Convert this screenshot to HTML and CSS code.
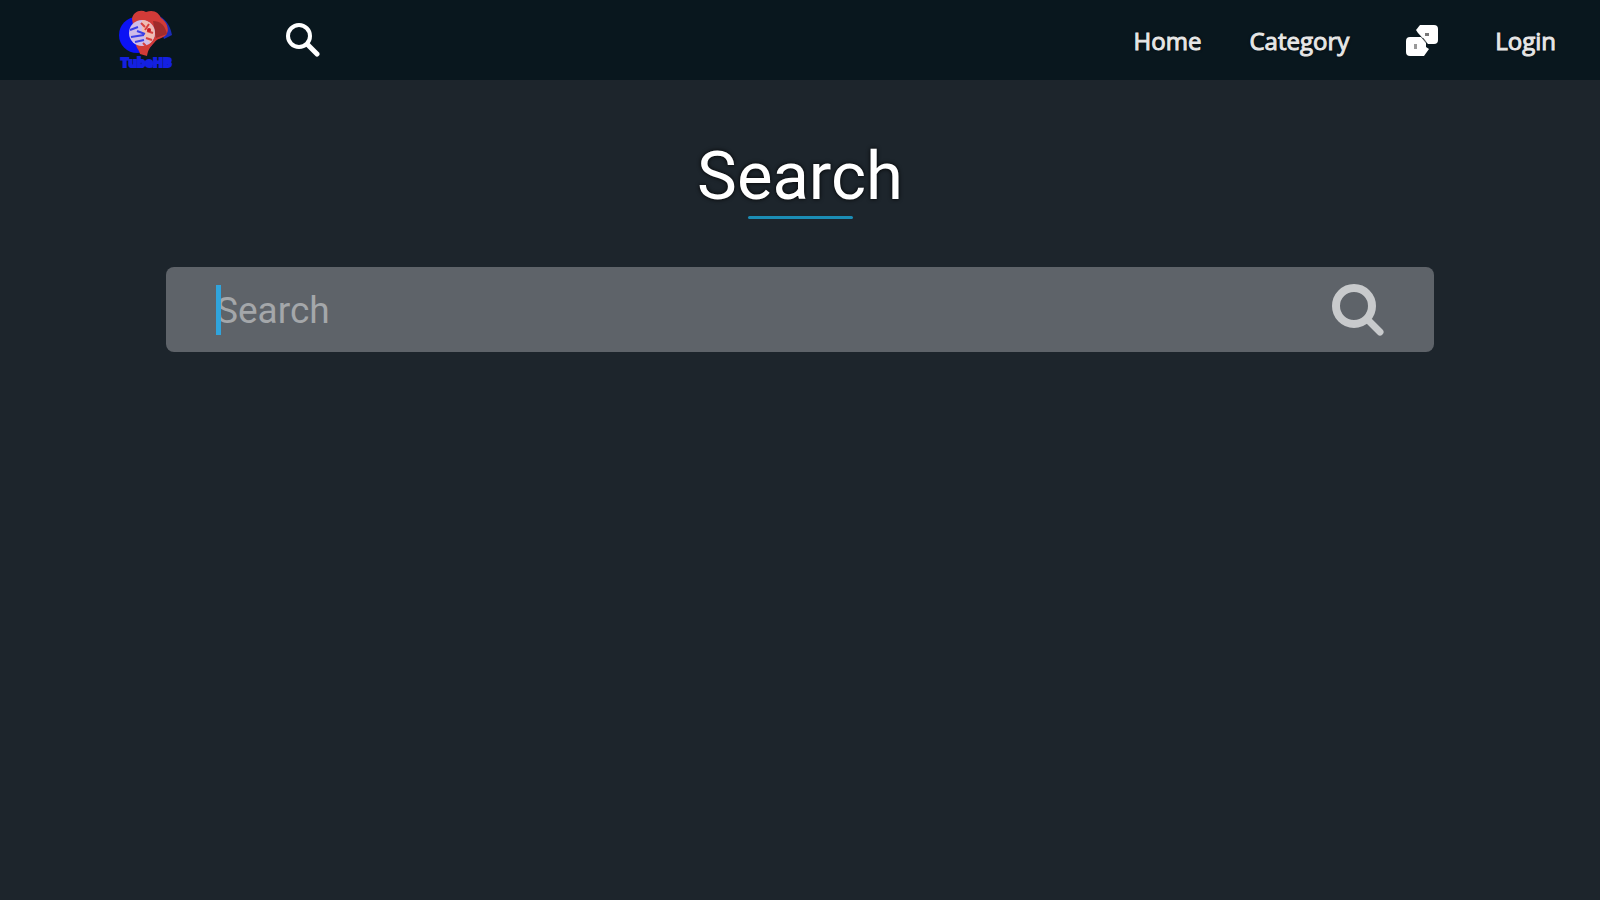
FILE: index.html
```html
<!DOCTYPE html>
<html lang="en">
<head>
  <meta charset="UTF-8">
  <meta name="viewport" content="width=device-width, initial-scale=1">
  <title>Search</title>
  <link rel="stylesheet" href="styles.css">
</head>
<body>

  <header class="navbar">
    <a href="#" class="logo" aria-label="Home page">
      <svg viewBox="0 0 54 60">
        <circle cx="18" cy="25" r="18" fill="#0b12f5"/>
        <path d="M36 4 Q50 9 53 25 L45 29 Z" fill="#1c2cb8"/>
        <path d="M13 9 C14 2 21 -1 27 2 C35 -1 40 3 42 8 C48 12 51 20 47 25 C43 29 38 28 35 33 C31 37 29 40 28 46 L21 44 C20 39 16 38 17 31 Z" fill="#d23b38"/>
        <path d="M34 11 Q45 11 48 24 L37 28 Z" fill="#a02c2c"/>
        <circle cx="23" cy="23" r="13" fill="#d0bce8"/>
        <path d="M23 10 A13 13 0 0 1 31 33 L23 23 Z" fill="#f0bdb4"/>
        <path d="M11 20 l8 -3 M12 27 l13 -2 M16 32 l9 -2 M18 21 l8 3" stroke="#3a3fe8" stroke-width="2"/>
        <path d="M22 13 l4 4 M30 14 l-4 6 M28 21 l6 2 M27 28 l6 2 M24 33 l3 3" stroke="#d8403e" stroke-width="2"/>
        <circle cx="30" cy="20" r="2" fill="#c81420"/>
        <text x="2" y="57" class="logo-text">TubeHB</text>
      </svg>
    </a>
    <a href="#search" class="nav-search" aria-label="Search">
      <svg viewBox="0 0 34 34" fill="none" stroke="#fff" stroke-linecap="round">
        <circle cx="13" cy="13" r="11" stroke-width="4"/>
        <path d="M22 22 L31 31" stroke-width="5"/>
      </svg>
    </a>
    <nav class="menu">
      <a href="#">Home</a>
      <a href="#">Category</a>
      <a href="#" class="random" aria-label="Random">
        <svg viewBox="0 0 34 34">
          <path d="M15 2 H29 Q33 2 33 6 V17 Q33 21 29 21 H23 L13 10 L11 7 Z" fill="#fff"/>
          <path d="M5 14 H16 L21 20 V24 L24 26 L19 33 H5 Q1 33 1 29 V18 Q1 14 5 14 Z" fill="#fff"/>
          <rect x="20" y="10" width="4" height="3" fill="#777"/>
          <rect x="9" y="21" width="3" height="5" fill="#999"/>
          <path d="M18 15 L21 19" stroke="#666" stroke-width="1"/>
        </svg>
      </a>
      <a href="#">Login</a>
    </nav>
  </header>

  <main class="container">
    <h1 class="title">Search</h1>
    <form class="search-box" id="search">
      <span class="caret"></span>
      <input type="text" placeholder="Search" aria-label="Search">
      <button type="submit" aria-label="Search">
        <svg viewBox="0 0 52 52" fill="none" stroke="#c8cacc" stroke-linecap="round">
          <circle cx="22" cy="22" r="18" stroke-width="8"/>
          <path d="M37 37 L48 48" stroke-width="7"/>
        </svg>
      </button>
    </form>
  </main>

</body>
</html>
```

FILE: styles.css
```css
* {
  box-sizing: border-box;
}
body {
  margin: 0;
  background-color: #1d252c;
  font-family: Roboto, Arial, sans-serif;
  color: #fff;
}
.navbar {
  display: flex;
  align-items: center;
  height: 80px;
  padding: 0 44px 0 119px;
  background-color: #09171e;
}
.navbar svg {
  display: block;
}
.logo svg {
  width: 54px;
  height: 60px;
}
.logo-text {
  font: bold 13px "Open Sans", sans-serif;
  fill: #1420e0;
  stroke: #1420e0;
  stroke-width: 2px;
}
.nav-search {
  margin-left: 113px;
}
.nav-search svg,
.random svg {
  width: 34px;
  height: 34px;
}
.menu {
  display: flex;
  align-items: center;
  gap: 48px;
  margin-left: auto;
}
.menu a {
  color: #e6e6e6;
  font-family: "Open Sans", sans-serif;
  font-size: 24px;
  text-decoration: none;
  text-shadow: 0 0 3px #000;
  -webkit-text-stroke: 1px #e6e6e6;
}
.menu .random {
  margin: 0 8px;
}
.container {
  padding: 60px 166px;
}
.title {
  margin: 0 0 48px;
  font-size: 67px;
  font-weight: 400;
  line-height: 72px;
  text-align: center;
  text-shadow: 0 0 4px #000;
}
.title::after {
  content: "";
  display: block;
  width: 105px;
  height: 3px;
  margin: 4px auto 0;
  border-radius: 2px;
  background-color: #1b8db5;
}
.search-box {
  position: relative;
  display: flex;
  align-items: center;
  height: 85px;
  padding: 0 50px;
  border-radius: 8px;
  background-color: #5e6369;
}
.search-box input {
  flex: 1;
  min-width: 0;
  height: 60px;
  padding: 2px 0 0;
  border: none;
  outline: none;
  background: none;
  color: #fff;
  font-family: inherit;
  font-size: 37px;
}
.search-box input::placeholder {
  color: #a4a7aa;
}
/* blue text cursor */
.caret {
  position: absolute;
  left: 50px;
  width: 5px;
  height: 50px;
  background-color: #30a4dc;
}
.search-box button {
  padding: 0;
  border: none;
  background: none;
  cursor: pointer;
}
.search-box button svg {
  display: block;
  width: 52px;
  height: 52px;
}
```
